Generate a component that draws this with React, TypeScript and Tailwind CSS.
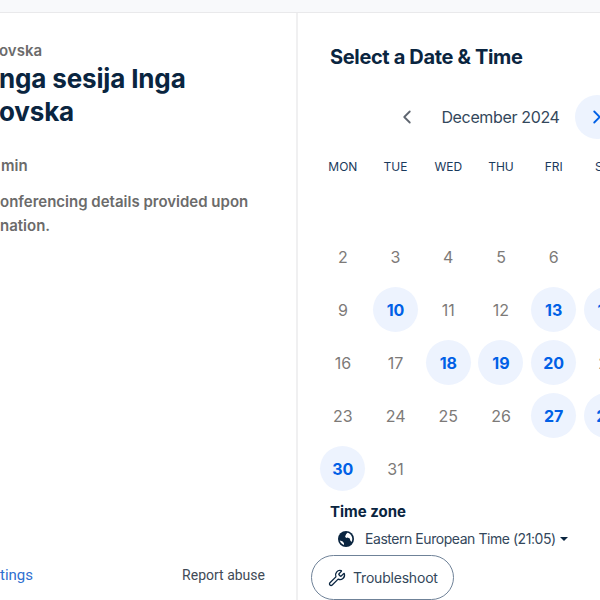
import { ChevronLeft, ChevronRight, Wrench } from "lucide-react";

const headers = ["MON", "TUE", "WED", "THU", "FRI", "SAT", "SUN"];

const weeks: (number | null)[][] = [
  [null, null, null, null, null, null, 1],
  [2, 3, 4, 5, 6, 7, 8],
  [9, 10, 11, 12, 13, 14, 15],
  [16, 17, 18, 19, 20, 21, 22],
  [23, 24, 25, 26, 27, 28, 29],
  [30, 31, null, null, null, null, null],
];

const available = [10, 13, 14, 18, 19, 20, 27, 28, 30];

function Day({ day }: { day: number | null }) {
  if (day === null) return <div className="h-[53px]" />;
  const open = available.includes(day);
  return (
    <div className="flex h-[53px] items-center justify-center">
      {open ? (
        <div className="flex h-[45px] w-[45px] items-center justify-center rounded-full bg-[#edf3fe] text-[16px] font-bold text-[#0060e6]">
          {day}
        </div>
      ) : (
        <span className="text-[16px] text-[#7d7a78]">{day}</span>
      )}
    </div>
  );
}

export default function App() {
  return (
    <div className="relative h-[600px] w-[600px] overflow-hidden bg-[#f8f9fb] pt-3 font-['Inter',sans-serif]">
      <div className="flex h-[588px] border-t border-[#e9e9eb] bg-white">
        <div className="flex w-[298px] shrink-0 flex-col overflow-hidden border-r-2 border-[#f0f0f1] pt-[29px]">
          <p className="-ml-px text-[15px] leading-[18px] font-semibold text-[#6b6b6b]">ovska</p>
          <h1 className="-ml-px mt-[2px] text-[26px] leading-[33px] font-bold tracking-[-0.15px] text-[#0a2540]">
            nga sesija Inga
            <br />
            ovska
          </h1>
          <p className="ml-px mt-[28px] text-[15px] leading-[20px] font-semibold text-[#6b6b6b]">min</p>
          <p className="mt-[14px] text-[15px] leading-[24px] font-semibold whitespace-nowrap text-[#6b6b6b]">
            onferencing details provided upon
            <br />
            nation.
          </p>
          <div className="mt-auto mb-[15px] flex items-center justify-between pr-[31px] font-['Roboto',sans-serif]">
            <a className="text-[15px] leading-[20px] text-[#2f6fd0]">tings</a>
            <a className="text-[14px] leading-[20px] text-[#414a56]">Report abuse</a>
          </div>
        </div>

        <div className="min-w-0 flex-1 pt-[33px]">
          <h2 className="ml-8 text-[20px] leading-[22px] font-bold tracking-[-0.35px] text-[#0a2540]">Select a Date &amp; Time</h2>

          <div className="ml-[18.5px] mt-[27px] w-[369px]">
            <div className="flex h-[44px] items-center justify-center pl-[2px]">
              <div className="flex h-[44px] w-[44px] items-center justify-center">
                <ChevronLeft className="h-[22px] w-[22px] text-[#5f6670]" strokeWidth={2} />
              </div>
              <span className="ml-[12px] mr-[15px] whitespace-nowrap text-[16px] tracking-[-0.35px] text-[#33475b]">December 2024</span>
              <div className="flex h-[44px] w-[44px] items-center justify-center rounded-full bg-[#edf3fe]">
                <ChevronRight className="h-[22px] w-[22px] text-[#0060e6]" strokeWidth={2} />
              </div>
            </div>

            <div className="mt-[20px] grid grid-cols-7">
              {headers.map((h) => (
                <div key={h} className="text-center text-[12px] leading-[16px] text-[#1a3a5c]">
                  {h}
                </div>
              ))}
            </div>

            <div className="mt-[2px] grid grid-cols-7">
              {weeks.flat().map((day, i) => (
                <Day key={i} day={day} />
              ))}
            </div>
          </div>

          <p className="ml-8 mt-[7px] text-[15px] leading-[20px] font-bold text-[#0a2540]">Time zone</p>
          <div className="ml-[40px] mt-[7px] flex items-center gap-[11px] text-[14px] leading-[20px] tracking-[-0.45px] text-[#33475b]">
            <svg viewBox="0 0 16 16" className="h-[16px] w-[16px] shrink-0">
              <circle cx="8" cy="8" r="8" fill="#0a2540" />
              <path d="M9.4 1.7c2.9.6 5 3.3 4.9 6.3 0 1-.3 2-.8 2.9l-1.2-1.3-.5-2-2.3-1.2-1.4.5-1-1.4 1-2.2Z" fill="#fff" />
              <path d="M1.8 9.4l2.6.8 1.5 1.7.2 2c-2.1-.6-3.8-2.4-4.3-4.5Z" fill="#fff" />
            </svg>
            <span className="whitespace-nowrap">Eastern European Time (21:05)</span>
            <span className="-ml-[7px] h-0 w-0 border-x-[4px] border-t-[4px] border-x-transparent border-t-[#0a2540]" />
          </div>
        </div>
      </div>

      <button className="absolute top-[555px] left-[311px] flex h-[45px] w-[143px] items-center gap-[7px] rounded-full border border-[#6f8298] bg-white pl-[16px] text-[14px] tracking-[-0.2px] text-[#33475b]">
        <Wrench className="h-[18px] w-[18px] text-[#0a2540]" strokeWidth={1.75} />
        Troubleshoot
      </button>
    </div>
  );
}
